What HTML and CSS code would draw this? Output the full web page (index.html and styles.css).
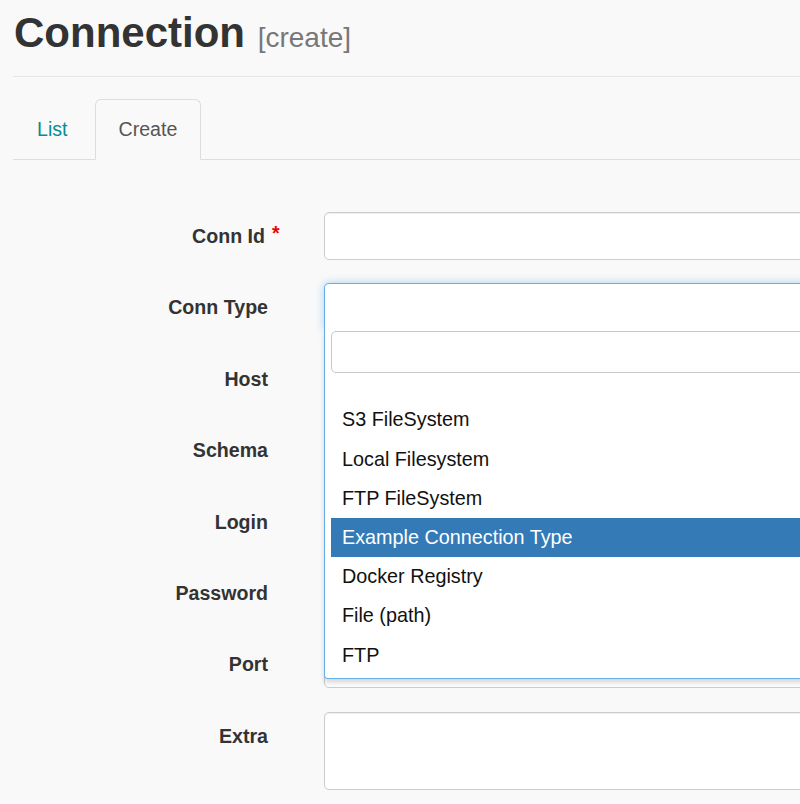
FILE: index.html
```html
<!DOCTYPE html>
<html>
<head>
<meta charset="utf-8">
<title>Connection</title>
<link rel="stylesheet" href="styles.css">
</head>
<body>
<div class="page">
  <h1 class="title">Connection <small class="sub">[create]</small></h1>
  <hr class="rule">
  <ul class="tabs">
    <li class="tab-item"><a class="tab tab-link">List</a></li>
    <li class="tab-item"><a class="tab tab-active">Create</a></li>
  </ul>
  <form class="form">
    <div class="row">
      <label class="label"><span class="label-text label-req">Conn Id<span class="req">*</span></span></label>
      <div class="field"><input class="input" type="text"></div>
    </div>
    <div class="row row-top">
      <label class="label"><span class="label-text">Conn Type</span></label>
      <div class="field field-select">
        <div class="select-box"></div>
        <div class="drop">
          <div class="search"></div>
          <ul class="results">
            <li class="opt">S3 FileSystem</li>
            <li class="opt">Local Filesystem</li>
            <li class="opt">FTP FileSystem</li>
            <li class="opt opt-hl">Example Connection Type</li>
            <li class="opt">Docker Registry</li>
            <li class="opt">File (path)</li>
            <li class="opt">FTP</li>
          </ul>
        </div>
      </div>
    </div>
    <div class="row">
      <label class="label"><span class="label-text">Host</span></label>
      <div class="field"><input class="input" type="text"></div>
    </div>
    <div class="row">
      <label class="label"><span class="label-text">Schema</span></label>
      <div class="field"><input class="input" type="text"></div>
    </div>
    <div class="row">
      <label class="label"><span class="label-text">Login</span></label>
      <div class="field"><input class="input" type="text"></div>
    </div>
    <div class="row">
      <label class="label"><span class="label-text">Password</span></label>
      <div class="field"><input class="input" type="password"></div>
    </div>
    <div class="row">
      <label class="label"><span class="label-text">Port</span></label>
      <div class="field"><input class="input" type="text"></div>
    </div>
    <div class="row">
      <label class="label"><span class="label-text">Extra</span></label>
      <div class="field"><textarea class="input textarea"></textarea></div>
    </div>
  </form>
</div>
</body>
</html>
```
FILE: styles.css
```css
html, body {
  margin: 0;
  padding: 0;
  background: #f9f9f9;
  overflow: hidden;
}
body {
  font-family: "Liberation Sans", Arial, Helvetica, sans-serif;
  color: #333;
  font-size: 19.6px;
}
.page {
  width: 1300px;
  padding-left: 13px;
}
.title {
  margin: 10px 0 0 1px;
  height: 46px;
  font-size: 42px;
  line-height: 46px;
  font-weight: bold;
  color: #333;
}
.sub {
  font-size: 28px;
  line-height: 1;
  font-weight: normal;
  color: #777;
  margin-left: 1px;
}
.rule {
  margin: 20px 0 0;
  border: 0;
  border-top: 1px solid #e6e6e6;
  height: 0;
}
.tabs {
  list-style: none;
  margin: 22px 0 0;
  padding: 0;
  display: flex;
  border-bottom: 1px solid #ddd;
}
.tab-item {
  margin-bottom: -1px;
  margin-right: 3px;
}
.tab {
  display: block;
  padding: 15px 23px 16px;
  line-height: 28px;
  font-size: 19.6px;
  border: 1px solid transparent;
  border-radius: 6px 6px 0 0;
}
.tab-link {
  color: #088b96;
}
.tab-active {
  color: #555;
  background: #f9f9f9;
  border-color: #ddd #ddd transparent;
}
.form {
  margin-top: 52px;
}
.row {
  display: flex;
  margin-bottom: 23.4px;
}
.label {
  width: 255px;
  flex: none;
  text-align: right;
  padding-top: 10px;
  line-height: 28px;
  font-weight: bold;
  font-size: 19.6px;
  color: #333;
}
.label-text {
  position: relative;
  display: inline-block;
}
.label-req {
  margin-right: 3px;
}
.req {
  position: absolute;
  left: 100%;
  margin-left: 7px;
  top: -3px;
  color: #e00;
  font-weight: bold;
}
.field {
  margin-left: 56px;
  width: 900px;
  position: relative;
}
.input {
  display: block;
  box-sizing: border-box;
  width: 100%;
  height: 48px;
  margin: 0;
  border: 1px solid #ccc;
  border-radius: 5px;
  background: #fff;
  box-shadow: inset 0 1px 1px rgba(0,0,0,.075);
  font: inherit;
}
.textarea {
  height: 78px;
  resize: none;
}
.select-box {
  box-sizing: border-box;
  height: 48px;
  border: 1px solid #66afe9;
  border-bottom: 0;
  border-radius: 5px 5px 0 0;
  background: #fff;
  box-shadow: 0 0 8px rgba(102,175,233,.55);
}
.drop {
  position: absolute;
  z-index: 5;
  top: 48px;
  left: 0;
  right: 0;
  box-sizing: border-box;
  background: #fff;
  border: 1px solid #66afe9;
  border-top: 0;
  border-radius: 0 0 4px 4px;
  box-shadow: 0 4px 5px rgba(0,0,0,.15);
  padding: 0 0 3px 6px;
}
.search {
  box-sizing: border-box;
  height: 42px;
  border: 1px solid #c8c8c8;
  border-radius: 5px;
  background: #fff;
}
.results {
  list-style: none;
  margin: 27px 0 0;
  padding: 0;
}
.opt {
  padding: 0 11px;
  line-height: 39.2px;
  height: 39.2px;
  font-size: 19.8px;
  color: #111;
}
.opt-hl {
  background: #337ab7;
  color: #fff;
}
```
